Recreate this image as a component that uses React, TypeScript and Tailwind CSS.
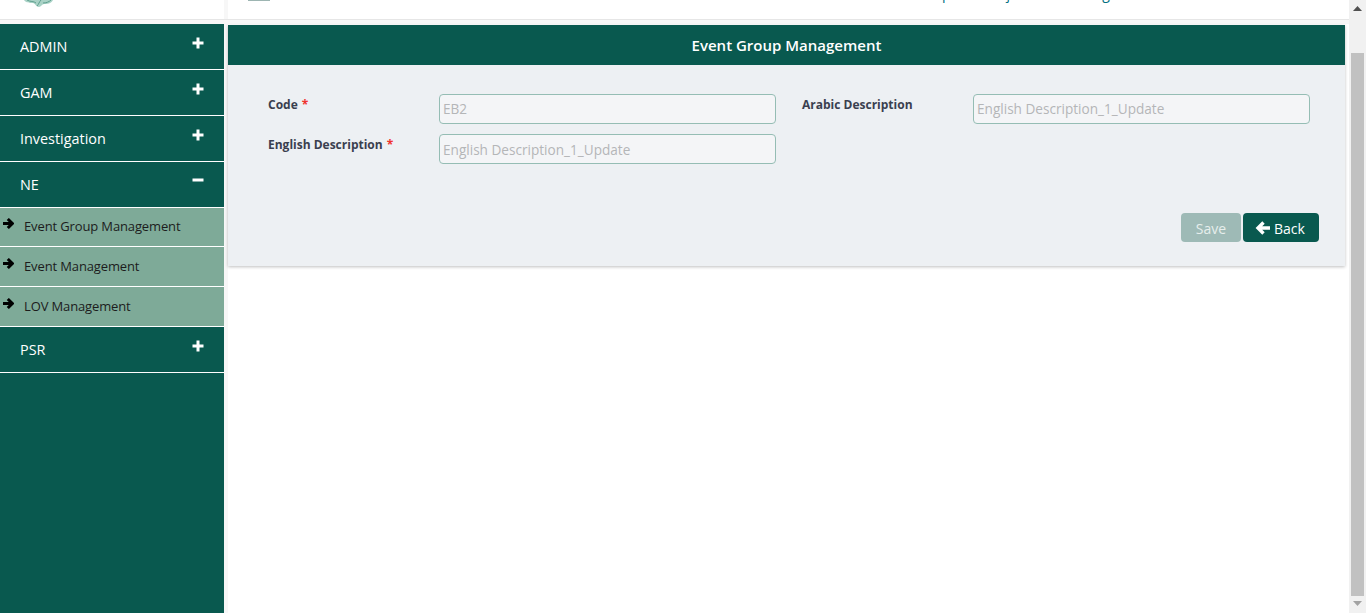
const Plus = () => (
  <svg width="12" height="12" viewBox="0 0 12 12" className="mt-[-8px] shrink-0">
    <path d="M4.5 0.5h3v4h4v3h-4v4h-3v-4h-4v-3h4z" fill="#fff" />
  </svg>
);

const Minus = () => (
  <svg width="12" height="12" viewBox="0 0 12 12" className="mt-[-9px] shrink-0">
    <rect x="0.5" y="4.5" width="11" height="3" fill="#fff" />
  </svg>
);

const ArrowRight = ({ first }: { first?: boolean }) => (
  <svg width="11" height="11" viewBox="0 0 11 11" className={`ml-[3px] shrink-0 ${first ? "mt-[10px]" : "mt-[11px]"}`}>
    <path d="M0 5.5h9M4.8 1l4.5 4.5-4.5 4.5" fill="none" stroke="#000" strokeWidth="3" />
  </svg>
);

const ArrowLeft = () => (
  <svg width="15" height="14" viewBox="0 0 15 14" className="shrink-0">
    <path d="M15 7H4M8.5 1.5L3 7l5.5 5.5" fill="none" stroke="#fff" strokeWidth="3.4" />
  </svg>
);

const MenuRow = ({ label, open }: { label: string; open?: boolean }) => (
  <div className="flex h-[46px] items-center justify-between border-b border-white pl-[20px] pr-[20px] text-[14.4px] text-white">
    <span>{label}</span>
    {open ? <Minus /> : <Plus />}
  </div>
);

const SubRow = ({ label, first }: { label: string; first?: boolean }) => (
  <div className={`flex items-start border-b border-white bg-[#7eaa98] text-[13px] tracking-[-0.13px] text-[#1c1c1c] ${first ? "h-[39px]" : "h-[40px]"}`}>
    <ArrowRight first={first} />
    <span className={`ml-[10px] leading-[18px] ${first ? "mt-[9px]" : "mt-[10px]"}`}>{label}</span>
  </div>
);

const Field = ({ label, required, value, top }: { label: string; required?: boolean; value: string; top?: boolean }) => (
  <div className="flex items-start">
    <label className="w-[171px] shrink-0 pt-[2px] text-[12px] font-bold leading-[18px] text-[#3a3f4f]">
      {label}
      {required && <span className="ml-[4px] text-[#f0322d]">*</span>}
    </label>
    <div className={`flex h-[30px] w-[337px] items-center rounded-[4px] border border-[#95bdb4] bg-[#f4f5f7] pl-[3px] text-[13.6px] text-[#b4b6b8] ${top ? "pt-[1px]" : "pt-[2px]"}`}>
      {value}
    </div>
  </div>
);

export default function App() {
  return (
    <div className="flex h-[613px] w-full overflow-hidden bg-white" style={{ fontFamily: '"Open Sans", sans-serif' }}>
      <div className="flex min-w-0 flex-1 flex-col bg-[#f7f7f7]">
        {/* header, scrolled mostly out of view */}
        <header className="flex h-[20px] shrink-0 border-b border-[#e6e6e6] bg-white">
          <div className="flex w-[224px] shrink-0 items-start pl-[23px]">
            <svg width="31" height="8" viewBox="0 0 31 8">
              <path d="M1 0c2 3 6 3 9 3 2 0 3 4 6 4 2 0 3-3 5-3 3 0 7 0 9-4z" fill="#a9d2c6" />
              <path d="M4 0c3 2 7 1 9 3M14 6c2-2 2-4 4-6M20 3c3 0 6-1 8-3" fill="none" stroke="#5fa08f" strokeWidth="1" />
            </svg>
          </div>
          <div className="w-[4px] shrink-0 bg-[#f7f7f7]" />
          <div className="flex flex-1 items-start overflow-hidden text-[14px] leading-[16px] text-[#00707f]">
            <div className="ml-[20px] h-[1px] w-[22px] bg-[#9db5b2]" />
            <span className="ml-[672px] mt-[-14px]">p</span>
            <span className="ml-[56px] mt-[-14px]">j</span>
            <span className="ml-[92px] mt-[-14px]">g</span>
          </div>
        </header>
        <div className="flex min-h-0 flex-1">
          <aside className="mt-[4px] w-[224px] shrink-0 bg-[#09594f]">
            <MenuRow label="ADMIN" />
            <MenuRow label="GAM" />
            <MenuRow label="Investigation" />
            <MenuRow label="NE" open />
            <SubRow label="Event Group Management" first />
            <SubRow label="Event Management" />
            <SubRow label="LOV Management" />
            <MenuRow label="PSR" />
          </aside>
          <main className="ml-[4px] mt-[4px] flex-1 bg-white pr-[4px]">
            <div className="mt-[1px] bg-[#edf0f3] shadow-[0_1px_3px_rgba(0,0,0,0.25)]">
              <div className="flex h-[40px] items-center justify-center bg-[#09594f] text-[15px] font-semibold text-white">
                Event Group Management
              </div>
              <div className="pb-[24px] pl-[40px] pr-[26px] pt-[29px]">
                <div className="grid w-[1042px] grid-cols-[534px_508px] gap-y-[10px]">
                  <Field label="Code" required value="EB2" top />
                  <Field label="Arabic Description" value="English Description_1_Update" top />
                  <Field label="English Description" required value="English Description_1_Update" />
                </div>
                <div className="mt-[49px] flex justify-end gap-[2px]">
                  <button className="flex h-[29px] w-[60px] items-center justify-center rounded-[4px] bg-[#9ebab6] pt-[2px] text-[14px] text-[#e6eeec]">
                    Save
                  </button>
                  <button className="flex h-[29px] w-[76px] items-center justify-center gap-[4px] rounded-[4px] bg-[#09594f] pr-[2px] text-[14px] text-white">
                    <ArrowLeft />
                    <span className="pt-[2px]">Back</span>
                  </button>
                </div>
              </div>
            </div>
          </main>
        </div>
      </div>
      {/* page scrollbar */}
      <div className="flex w-[17px] shrink-0 flex-col items-center bg-[#f1f1f1]">
        <svg width="9" height="5" viewBox="0 0 9 5" className="mt-[6px] shrink-0">
          <path d="M4.5 0L9 5H0z" fill="#505050" />
        </svg>
        <div className="mt-[42px] h-[543px] w-[13px] shrink-0 bg-[#c1c1c1]" />
        <svg width="9" height="5" viewBox="0 0 9 5" className="mt-[5px] shrink-0">
          <path d="M0 0h9L4.5 5z" fill="#a3a3a3" />
        </svg>
      </div>
    </div>
  );
}
